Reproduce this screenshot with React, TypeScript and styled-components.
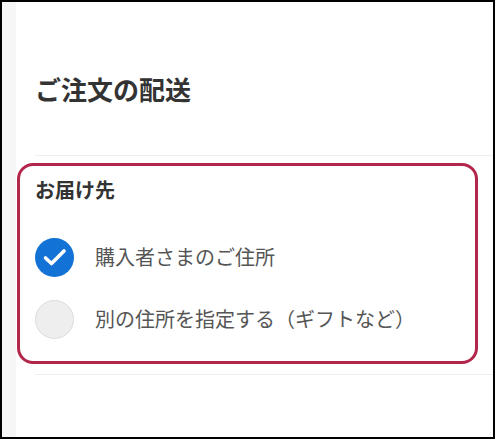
import styled, { createGlobalStyle } from "styled-components";

const GlobalStyle = createGlobalStyle`
  html, body {
    margin: 0;
    padding: 0;
    background: #ffffff;
  }
  body {
    font-family: "Noto Sans CJK JP", "Noto Sans", sans-serif;
  }
`;

const options = [
  { id: "self", label: "購入者さまのご住所", checked: true },
  { id: "gift", label: "別の住所を指定する（ギフトなど）", checked: false },
];

export default function App() {
  return (
    <>
      <GlobalStyle />
      <Frame>
        <SideStrip />
        <Main>
          <Heading>ご注文の配送</Heading>
          <Divider />
          <DeliveryBox>
            <BoxTitle>お届け先</BoxTitle>
            <OptionList>
              {options.map((opt) => (
                <OptionRow key={opt.id}>
                  <RadioCircle $checked={opt.checked}>
                    {opt.checked && (
                      <svg width="39" height="39" viewBox="0 0 39 39">
                        <polyline
                          points="10.5,20 16.5,25.5 29,13"
                          fill="none"
                          stroke="#ffffff"
                          strokeWidth="3.6"
                          strokeLinecap="round"
                          strokeLinejoin="round"
                        />
                      </svg>
                    )}
                  </RadioCircle>
                  <OptionLabel>{opt.label}</OptionLabel>
                </OptionRow>
              ))}
            </OptionList>
          </DeliveryBox>
          <Divider $gap={10} />
        </Main>
      </Frame>
    </>
  );
}

const Frame = styled.div`
  box-sizing: border-box;
  width: 495px;
  height: 439px;
  border: 2px solid #000000;
  display: flex;
  overflow: hidden;
`;

const SideStrip = styled.div`
  width: 14px;
  flex: none;
  background: #f6f6f6;
`;

const Main = styled.div`
  flex: 1;
  min-width: 0;
  padding: 69px 0 0 19px;
  background: #ffffff;
`;

const Heading = styled.h1`
  margin: 0;
  font-size: 26px;
  line-height: 36px;
  font-weight: 700;
  color: #333333;
`;

const Divider = styled.div<{ $gap?: number }>`
  height: 1px;
  background: #eeeeee;
  margin-top: ${(p) => p.$gap ?? 48}px;
`;

const DeliveryBox = styled.section`
  box-sizing: border-box;
  width: 461px;
  margin: 7px 0 0 -18px;
  padding: 10px 15px 22px;
  border: 3px solid #b3264b;
  border-radius: 16px;
`;

const BoxTitle = styled.h2`
  margin: 0;
  font-size: 20px;
  line-height: 28px;
  font-weight: 700;
  color: #333333;
`;

const OptionList = styled.div`
  display: flex;
  flex-direction: column;
  gap: 22px;
  margin-top: 33px;
`;

const OptionRow = styled.label`
  display: flex;
  align-items: center;
  gap: 21px;
  height: 40px;
`;

const RadioCircle = styled.span<{ $checked: boolean }>`
  box-sizing: border-box;
  width: 39px;
  height: 39px;
  flex: none;
  border-radius: 50%;
  display: flex;
  align-items: center;
  justify-content: center;
  background: ${(p) => (p.$checked ? "#1272d5" : "#eeeeee")};
  border: ${(p) => (p.$checked ? "none" : "1.5px solid #dcdcdc")};
`;

const OptionLabel = styled.span`
  font-size: 20px;
  line-height: 28px;
  color: #555555;
`;
